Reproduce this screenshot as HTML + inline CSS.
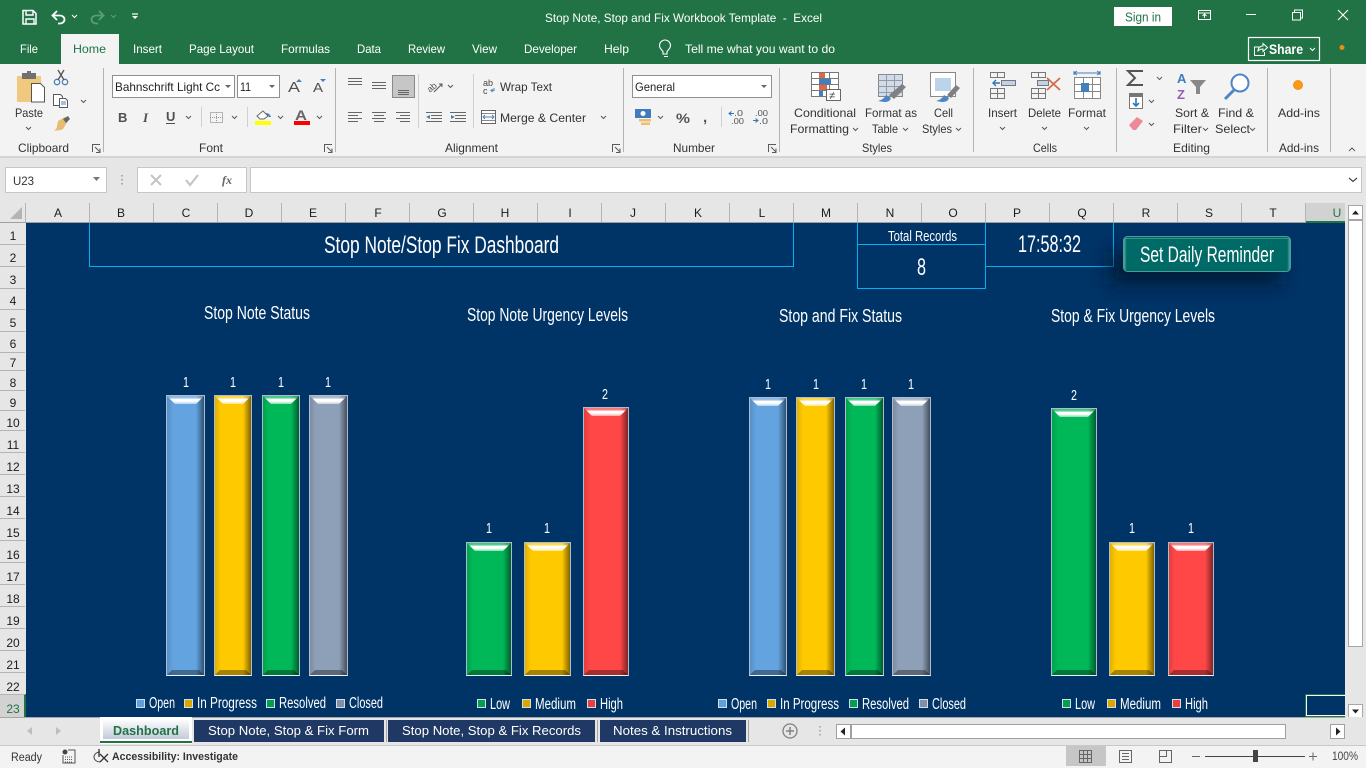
<!DOCTYPE html>
<html lang="en"><head><meta charset="utf-8"><title>Stop Note, Stop and Fix Workbook Template - Excel</title>
<style>
html,body{margin:0;padding:0;width:1366px;height:768px;overflow:hidden;background:#e6e6e6}
svg.page{position:absolute;left:0;top:0}
svg text{font-family:"Liberation Sans",sans-serif;white-space:pre}
.u{font-size:12px;fill:#333}
.m{font-size:12px;fill:#fff}
.c{font-size:12px;fill:#1c1c1c;text-anchor:middle}
.v{font-size:15px;fill:#fff;text-anchor:middle}
.t{font-size:18.5px;fill:#fff}
.l{font-size:15.5px;fill:#fff}
.s{font-size:13px;fill:#fff}
.b{position:absolute;box-sizing:border-box;border:1px solid #aebccd;border-bottom:1px solid #f0f4f8;overflow:hidden;background:
linear-gradient(to right,rgba(0,0,0,.12),transparent 6px,transparent calc(100% - 8px),rgba(0,0,0,.06) calc(100% - 7px),rgba(0,0,0,.5) 100%),var(--c)}
.b:before{content:"";position:absolute;left:0;right:0;top:0;height:8px;clip-path:polygon(0 0,100% 0,calc(100% - 8px) 100%,8px 100%);background:linear-gradient(rgba(255,255,255,.2),rgba(255,255,255,.35) 25%,#fff 40%,#fff 65%,rgba(255,255,255,.5))}
.b:after{content:"";position:absolute;left:0;right:0;bottom:0;height:5px;clip-path:polygon(5px 0,calc(100% - 5px) 0,100% 100%,0 100%);background:rgba(0,0,0,.35)}
</style></head><body>
<svg class="page" width="1366" height="768" viewBox="0 0 1366 768" xmlns="http://www.w3.org/2000/svg">
<defs>
<linearGradient id="dash" x1="0" y1="0" x2="0" y2="1"><stop offset="0" stop-color="#fff"/><stop offset="1" stop-color="#c2cad9"/></linearGradient>
<linearGradient id="btn" x1="0" y1="0" x2="1" y2="0"><stop offset="0" stop-color="#5ab5ae"/><stop offset=".02" stop-color="#006b66"/><stop offset=".98" stop-color="#006b66"/><stop offset="1" stop-color="#5ab5ae"/></linearGradient>
<filter id="blur" x="-30%" y="-60%" width="160%" height="220%"><feGaussianBlur stdDeviation="9"/></filter>
</defs>
<!-- title bar -->
<rect width="1366" height="64" fill="#217346"/>
<rect x="61" y="34" width="58" height="30" fill="#f3f3f3"/>
<g fill="none" stroke="#fff" stroke-width="1.5">
<path d="M23 10.500h10l3 3v10.500h-13z"/><path d="M26 11v4h7v-4M26 24v-5h8v5" stroke-width="1.400"/>
<path d="M53 15.500h7a4.500 4 0 0 1 0 8h-2" stroke-width="1.800"/><path d="M57 11l-4.500 4.500 4.500 4.500" stroke-width="1.800"/>
<path d="M72 15l2.500 2.500 2.500-2.500" stroke-width="1.100"/>
<g stroke="#5c9c7c"><path d="M103 15.500h-7a4.500 4 0 0 0 0 8h2" stroke-width="1.800"/><path d="M99 11l4.500 4.500-4.500 4.500" stroke-width="1.800"/><path d="M111 15l2.500 2.500 2.500-2.500" stroke-width="1.100"/></g>
<path d="M132 14h6" stroke-width="1.200"/>
<rect x="1198.500" y="10.500" width="12" height="9" stroke-width="1"/><path d="M1198.500 13h12M1204.500 18v-4M1202.500 16l2-2 2 2" stroke-width="1"/>
<path d="M1246 14.500h10" stroke-width="1"/>
<rect x="1292.500" y="12.500" width="8" height="7.500" stroke-width="1"/><path d="M1294.500 12v-2h8v8h-2" stroke-width="1"/>
<path d="M1338 10l10 10M1348 10l-10 10" stroke-width="1.100"/>
</g>
<path d="M132 16h6l-3 3z" fill="#fff"/>
<text class="m" x="545" y="22" textLength="277" lengthAdjust="spacingAndGlyphs">Stop Note, Stop and Fix Workbook Template  -  Excel</text>
<rect x="1114" y="7" width="58" height="19" fill="#fff"/>
<text class="u" x="1125" y="21.500" textLength="36" lengthAdjust="spacingAndGlyphs" style="fill:#217346;font-size:13px">Sign in</text>
<text class="m" x="20" y="53" textLength="18" lengthAdjust="spacingAndGlyphs">File</text>
<text class="m" x="73" y="53" textLength="33" lengthAdjust="spacingAndGlyphs" style="fill:#217346">Home</text>
<text class="m" x="133" y="53" textLength="29" lengthAdjust="spacingAndGlyphs">Insert</text>
<text class="m" x="189" y="53" textLength="65" lengthAdjust="spacingAndGlyphs">Page Layout</text>
<text class="m" x="281" y="53" textLength="49" lengthAdjust="spacingAndGlyphs">Formulas</text>
<text class="m" x="357" y="53" textLength="24" lengthAdjust="spacingAndGlyphs">Data</text>
<text class="m" x="408" y="53" textLength="37" lengthAdjust="spacingAndGlyphs">Review</text>
<text class="m" x="472" y="53" textLength="25" lengthAdjust="spacingAndGlyphs">View</text>
<text class="m" x="524" y="53" textLength="53" lengthAdjust="spacingAndGlyphs">Developer</text>
<text class="m" x="604" y="53" textLength="25" lengthAdjust="spacingAndGlyphs">Help</text>
<text class="m" x="685" y="53" textLength="150" lengthAdjust="spacingAndGlyphs">Tell me what you want to do</text>
<g fill="none" stroke="#fff" stroke-width="1.100"><path d="M663 54v-2.500c-1-1.500-3.500-3-3.500-6a5.500 5.500 0 0 1 11 0c0 3-2.500 4.500-3.500 6v2.500zM664 56.500h4"/>
<rect x="1248.500" y="37.500" width="71" height="23" stroke-width="1.200"/>
<path d="M1259 47h-4.500v8.500h10V52M1258 51c0-3 2-5 5-5v-2.500l4.500 4-4.500 4V49c-2 0-3.500.5-5 2z" stroke-width="1"/><path d="M1310 48l2.500 2.500 2.500-2.500"/></g>
<text x="1269" y="54" textLength="34" lengthAdjust="spacingAndGlyphs" style="font-size:13.500px;fill:#fff;font-weight:bold">Share</text>
<circle cx="1342" cy="47.500" r="2.500" fill="#f28a12"/>
<!-- ribbon -->
<rect y="64" width="1366" height="92" fill="#f3f3f3"/>
<rect y="156" width="1366" height="2" fill="#d4d4d4"/>
<rect y="158" width="1366" height="45" fill="#e6e6e6"/>
<g fill="#b3b3b3"><rect x="103" y="68" width="1" height="84"/><rect x="335" y="68" width="1" height="84"/><rect x="623" y="68" width="1" height="84"/><rect x="779" y="68" width="1" height="84"/><rect x="973" y="68" width="1" height="84"/><rect x="1116" y="68" width="1" height="84"/><rect x="1267" y="68" width="1" height="84"/><rect x="1330" y="68" width="1" height="84"/></g>
<g fill="#d0d0d0"><rect x="201" y="107" width="1" height="20"/><rect x="247" y="107" width="1" height="20"/><rect x="418" y="74" width="1" height="54"/><rect x="473" y="74" width="1" height="54"/><rect x="721" y="107" width="1" height="20"/></g>
<!-- clipboard -->
<path d="M17 76h24v13h-10v13h-14z" fill="#f0c87e"/><rect x="22" y="73" width="14" height="6" fill="#707070"/><rect x="27" y="71" width="4" height="3" fill="#707070"/>
<path d="M31.500 83.500h9l4 4v14.500h-13z" fill="#fff" stroke="#555"/>
<g fill="none" stroke="#4d7fb7" stroke-width="1.300"><circle cx="57" cy="82" r="2.700"/><circle cx="65" cy="82" r="2.700"/></g><path d="M58 80l6-10M64 80l-6-10" stroke="#555" stroke-width="1.300"/>
<g fill="#fff" stroke="#5a5a5a"><path d="M53.500 94.500h7l2 2v9h-9z"/><path d="M59.500 98.500h6l2 2v7h-8z"/></g><path d="M61 102h5M61 104h5" stroke="#4d7fb7"/>
<path d="M58 121l7-4 3 4-5 8c-3 2-6 1-9 2 2-2 3-3 3-5z" fill="#e8bb70"/><path d="M63 119l5-3 2 3-4 4z" fill="#666"/>
<text class="u" x="15" y="117" textLength="28" lengthAdjust="spacingAndGlyphs">Paste</text>
<text class="u" x="18" y="152" textLength="51" lengthAdjust="spacingAndGlyphs">Clipboard</text>
<text class="u" x="199" y="152" textLength="24" lengthAdjust="spacingAndGlyphs">Font</text>
<text class="u" x="445" y="152" textLength="53" lengthAdjust="spacingAndGlyphs">Alignment</text>
<text class="u" x="673" y="152" textLength="42" lengthAdjust="spacingAndGlyphs">Number</text>
<text class="u" x="862" y="152" textLength="30" lengthAdjust="spacingAndGlyphs">Styles</text>
<text class="u" x="1033" y="152" textLength="24" lengthAdjust="spacingAndGlyphs">Cells</text>
<text class="u" x="1173" y="152" textLength="37" lengthAdjust="spacingAndGlyphs">Editing</text>
<text class="u" x="1279" y="152" textLength="40" lengthAdjust="spacingAndGlyphs">Add-ins</text>
<!-- dialog launchers & chevrons -->
<g fill="none" stroke="#5a5a5a" stroke-width="1"><path d="M92.500 152v-7.500h7.500M95 147l5 5M100 148.500v4h-4"/><path d="M324.500 152v-7.500h7.500M327 147l5 5M332 148.500v4h-4"/><path d="M612.500 152v-7.500h7.500M615 147l5 5M620 148.500v4h-4"/><path d="M768.500 152v-7.500h7.500M771 147l5 5M776 148.500v4h-4"/>
<path d="M26 127l2.500 2.500 2.500-2.500M81 100l2.500 2.500 2.500-2.500M186 116l2.500 2.500 2.500-2.500M232 116l2.500 2.500 2.500-2.500M278 116l2.500 2.500 2.500-2.500M317 116l2.500 2.500 2.500-2.500M448 85l2.500 2.500 2.500-2.500M601 116l2.500 2.500 2.500-2.500M658 116l2.500 2.500 2.500-2.500M853 128l2.500 2.500 2.500-2.500M903 128l2.500 2.500 2.500-2.500M956 128l2.500 2.500 2.500-2.500M1000 127l2.500 2.500 2.500-2.500M1042 127l2.500 2.500 2.500-2.500M1084 127l2.500 2.500 2.500-2.500M1157 77l2.500 2.500 2.500-2.500M1149 100l2.500 2.500 2.500-2.500M1149 123l2.500 2.500 2.500-2.500M1203 128l2.500 2.500 2.500-2.500M1250 128l2.500 2.500 2.500-2.500M1349 151l3-3 3 3"/></g>
<!-- font group -->
<rect x="112.500" y="75.500" width="122" height="22" fill="#fff" stroke="#8f8f8f"/><rect x="237.500" y="75.500" width="42" height="22" fill="#fff" stroke="#8f8f8f"/>
<text class="u" x="115" y="91" textLength="105" lengthAdjust="spacingAndGlyphs" style="fill:#222">Bahnschrift Light Cc</text>
<text class="u" x="240" y="91" textLength="11" lengthAdjust="spacingAndGlyphs" style="fill:#222">11</text>
<path d="M225 85h6l-3 3zM269 85h6l-3 3z" fill="#666"/>
<text x="288" y="92" textLength="12" lengthAdjust="spacingAndGlyphs" style="font-size:15px;fill:#505050">A</text><path d="M296 82h6l-3-3z" fill="#4d7fb7"/>
<text x="313" y="92" textLength="10" lengthAdjust="spacingAndGlyphs" style="font-size:13px;fill:#505050">A</text><path d="M320 79h6l-3 3z" fill="#4d7fb7"/>
<text x="118" y="122" style="font-size:13px;font-weight:bold;fill:#505050">B</text>
<text x="143" y="122" style="font-size:13px;font-style:italic;font-family:'Liberation Serif',serif;font-weight:bold;fill:#505050">I</text>
<text x="166" y="121" style="font-size:13px;font-weight:bold;fill:#505050">U</text><rect x="166" y="123" width="9" height="1" fill="#505050"/>
<rect x="210.500" y="112.500" width="12" height="10" fill="none" stroke="#777" stroke-dasharray="1 1"/><path d="M216.500 112v11M210 117.500h13" stroke="#999" stroke-dasharray="1 1"/>
<path d="M257 116l6-5 5 5-4 3h-4z" fill="#fff" stroke="#666"/><path d="M266 113c2 0 4 1 5 4l-2 0z" fill="#4d7fb7"/><rect x="255" y="121" width="16" height="4" fill="#ff0"/>
<text x="295" y="120" textLength="12" lengthAdjust="spacingAndGlyphs" style="font-size:14px;font-weight:bold;fill:#666">A</text><rect x="294" y="121" width="16" height="4" fill="#f00"/>
<!-- alignment -->
<g stroke="#666" fill="none"><path d="M348 78.500h14M348 81.500h14M348 84.500h14M372 82.500h14M372 85.500h14M372 88.500h14"/>
<path d="M348 112.500h14M348 115.500h10M348 118.500h14M348 121.500h10M372 112.500h14M374 115.500h10M372 118.500h14M374 121.500h10M396 112.500h14M400 115.500h10M396 118.500h14M400 121.500h10"/>
<path d="M431 115.500h11M431 118.500h11M426 112.500h16M426 121.500h16M455 115.500h11M455 118.500h11M450 112.500h16M450 121.500h16"/></g>
<rect x="392.500" y="75.500" width="22" height="22" fill="#c6c6c6" stroke="#8a8a8a"/><path d="M398 90.500h11M398 92.500h11M398 94.500h11" stroke="#666"/>
<path d="M430 115l-4 2 4 2z" fill="#4d7fb7"/><path d="M451 115l4 2-4 2z" fill="#4d7fb7"/>
<text x="426" y="90" transform="rotate(-40 432 86)" style="font-size:9px;fill:#555">ab</text><path d="M434 92l8-8m-3 0h3v3" stroke="#555" fill="none"/>
<text x="483" y="86" style="font-size:9px;fill:#444">ab</text><text x="483" y="94" style="font-size:9px;fill:#444">c</text><path d="M494 88v2.500h-3m1.500-1.500l-1.500 1.500 1.500 1.500" stroke="#4d7fb7" fill="none"/>
<text class="u" x="500" y="91" textLength="52" lengthAdjust="spacingAndGlyphs">Wrap Text</text>
<rect x="481.500" y="110.500" width="14" height="13" fill="#fff" stroke="#666"/><path d="M482 113.500h13M482 120.500h13" stroke="#888"/><path d="M484 117h9M485 115l-2 2 2 2M492 115l2 2-2 2" stroke="#4d7fb7" fill="none"/>
<text class="u" x="500" y="122" textLength="86" lengthAdjust="spacingAndGlyphs">Merge &amp; Center</text>
<!-- number -->
<rect x="632.500" y="75.500" width="139" height="22" fill="#fff" stroke="#8f8f8f"/>
<path d="M761 85h6l-3 3z" fill="#666"/>
<text class="u" x="635" y="91" textLength="40" lengthAdjust="spacingAndGlyphs" style="fill:#222">General</text>
<rect x="635" y="109" width="16" height="9" fill="#3f7cbd"/><circle cx="643" cy="113.500" r="2.500" fill="#fff"/><rect x="639" y="119" width="12" height="2.500" fill="#ecc06c"/><rect x="641" y="122.500" width="9" height="2.500" fill="#ecc06c"/>
<text x="676" y="123" textLength="14" lengthAdjust="spacingAndGlyphs" style="font-size:14px;fill:#555;font-weight:bold">%</text>
<text x="703" y="122" style="font-size:15px;fill:#555;font-weight:bold">,</text>
<text x="734" y="116" textLength="9" lengthAdjust="spacingAndGlyphs" style="font-size:8px;fill:#555">.0</text><text x="731" y="124" textLength="13" lengthAdjust="spacingAndGlyphs" style="font-size:8px;fill:#555">.00</text><path d="M729 113.500h5m-2.500-2l-2.500 2 2.500 2" stroke="#2e75b6" fill="none"/>
<text x="755" y="116" textLength="13" lengthAdjust="spacingAndGlyphs" style="font-size:8px;fill:#555">.00</text><text x="759" y="124" textLength="9" lengthAdjust="spacingAndGlyphs" style="font-size:8px;fill:#555">.0</text><path d="M753 120.500h5m-2.500-2l2.500 2-2.500 2" stroke="#2e75b6" fill="none"/>
<!-- styles -->
<g fill="none" stroke="#777"><rect x="811.500" y="72.500" width="27" height="24" fill="#fff"/><path d="M811 78.500h28M811 84.500h28M811 90.500h28M820.500 72v25M829.500 72v25"/></g>
<rect x="819" y="73" width="6" height="5" fill="#d8694b"/><rect x="819" y="79" width="12" height="5" fill="#447fbd"/><rect x="819" y="85" width="8" height="5" fill="#d8694b"/><rect x="819" y="91" width="4" height="5" fill="#447fbd"/>
<rect x="826.500" y="89.500" width="14" height="11" fill="#fff" stroke="#666"/><text x="829" y="99" style="font-size:11px;fill:#444">≠</text>
<text class="u" x="794" y="117" textLength="62" lengthAdjust="spacingAndGlyphs">Conditional</text>
<text class="u" x="790" y="133" textLength="59" lengthAdjust="spacingAndGlyphs">Formatting</text>
<rect x="878.500" y="74.500" width="24" height="22" fill="#cfdceb" stroke="#888"/><path d="M878 80.500h25M878 86.500h25M878 92.500h25M886.500 74v23M894.500 74v23" stroke="#999"/><path d="M878 101c3-1 6-2 8-6l5 3c-1 3-3 4-7 4z" fill="#4d86c6"/><path d="M889 95l13-11 4 3-12 12z" fill="#808080"/>
<text class="u" x="865" y="117" textLength="52" lengthAdjust="spacingAndGlyphs">Format as</text>
<text class="u" x="872" y="133" textLength="26" lengthAdjust="spacingAndGlyphs">Table</text>
<rect x="930.500" y="72.500" width="25" height="24" fill="#fff" stroke="#888"/><rect x="935" y="78" width="16" height="13" fill="#bdd3ea"/><path d="M936 101c3-1 6-2 8-6l5 3c-1 3-3 4-7 4z" fill="#4d86c6"/><path d="M947 95l9-10 4 3-9 10z" fill="#808080"/>
<text class="u" x="934" y="117" textLength="19" lengthAdjust="spacingAndGlyphs">Cell</text>
<text class="u" x="922" y="133" textLength="30" lengthAdjust="spacingAndGlyphs">Styles</text>
<!-- cells -->
<g fill="none" stroke="#777"><rect x="990.500" y="72.500" width="14" height="5"/><path d="M997.500 72v6"/><rect x="990.500" y="88.500" width="14" height="10"/><path d="M997.500 88v11M990 93.500h15"/>
<rect x="1031.500" y="72.500" width="14" height="5"/><path d="M1038.500 72v6"/><rect x="1031.500" y="88.500" width="14" height="10"/><path d="M1038.500 88v11M1031 93.500h15"/></g>
<rect x="1001.500" y="80.500" width="14" height="5" fill="#bcd3ea" stroke="#777"/><path d="M1000 83h-7m3-3l-3 3 3 3" stroke="#2e75b6" fill="none" stroke-width="1.400"/>
<rect x="1037.500" y="80.500" width="11" height="5" fill="#bcd3ea" stroke="#777"/><path d="M1047 78l13 12M1060 78l-13 12" stroke="#d8694b" stroke-width="1.800"/>
<g fill="none" stroke="#888"><rect x="1074.500" y="77.500" width="26" height="21" fill="#fff"/><path d="M1074 84.500h27M1074 91.500h27M1083.500 77v22M1092.500 77v22"/></g><rect x="1081" y="83" width="8" height="9" fill="#447fbd"/><path d="M1074 73h26M1074 71v4M1100 71v4M1077 71l-3 2 3 2M1097 71l3 2-3 2" stroke="#447fbd" fill="none"/>
<text class="u" x="988" y="117" textLength="29" lengthAdjust="spacingAndGlyphs">Insert</text>
<text class="u" x="1028" y="117" textLength="33" lengthAdjust="spacingAndGlyphs">Delete</text>
<text class="u" x="1068" y="117" textLength="38" lengthAdjust="spacingAndGlyphs">Format</text>
<!-- editing -->
<path d="M1143 71h-15l7 7-7 7h15" fill="none" stroke="#555" stroke-width="2"/>
<rect x="1129.500" y="93.500" width="13" height="15" fill="#fff" stroke="#777"/><rect x="1130" y="94" width="12" height="3" fill="#777"/><path d="M1136 98v8m-3-3l3 3 3-3" fill="none" stroke="#2e75b6" stroke-width="1.600"/>
<path d="M1129 125l8-8 6 4-7 9h-3z" fill="#ec8a99"/>
<text x="1177" y="83" style="font-size:13px;font-weight:bold;fill:#3f7cbd">A</text><text x="1177" y="99" style="font-size:13px;font-weight:bold;fill:#9561b0">Z</text>
<path d="M1190 80h16l-6 7v7h-4v-7z" fill="#888"/>
<text class="u" x="1175" y="117" textLength="34" lengthAdjust="spacingAndGlyphs">Sort &amp;</text>
<text class="u" x="1173" y="133" textLength="29" lengthAdjust="spacingAndGlyphs">Filter</text>
<circle cx="1240" cy="83" r="8.500" fill="#fff" stroke="#4d86c6" stroke-width="2"/><path d="M1234 90l-9 9" stroke="#4d86c6" stroke-width="3"/>
<text class="u" x="1218" y="117" textLength="36" lengthAdjust="spacingAndGlyphs">Find &amp;</text>
<text class="u" x="1215" y="133" textLength="35" lengthAdjust="spacingAndGlyphs">Select</text>
<circle cx="1298" cy="85" r="5" fill="#f7941d"/><circle cx="1298" cy="85" r="3" fill="#ff9a1a"/>
<text class="u" x="1278" y="117" textLength="42" lengthAdjust="spacingAndGlyphs">Add-ins</text>
<!-- formula bar -->
<rect x="5.500" y="167.500" width="101" height="25" fill="#fff" stroke="#c6c6c6"/>
<text x="13" y="185" textLength="21" lengthAdjust="spacingAndGlyphs" style="font-size:12px;fill:#333">U23</text>
<path d="M93 177h7l-3.500 4z" fill="#777"/>
<path d="M122 175v1.500M122 179v1.500M122 183v1.500" stroke="#aaa" stroke-width="2"/>
<rect x="137.500" y="167.500" width="109" height="25" fill="#fff" stroke="#c6c6c6"/>
<rect x="250.500" y="167.500" width="1111" height="25" fill="#fff" stroke="#c6c6c6"/>
<path d="M151 175l10 10M161 175l-10 10" stroke="#c4c4c4" stroke-width="2"/><path d="M186 180l4 5 8-10" fill="none" stroke="#c4c4c4" stroke-width="2.200"/>
<text x="222" y="184" style="font-size:12px;font-style:italic;font-weight:bold;font-family:'Liberation Serif',serif;fill:#666">fx</text>
<path d="M1349 178l4 3.500 4-3.500" fill="none" stroke="#444" stroke-width="1.200"/>
<!-- headers -->
<rect y="203" width="1366" height="20" fill="#e6e6e6"/><rect y="222" width="1345" height="1" fill="#a0a0a0"/>
<path d="M10 219h12v-12z" fill="#b4b4b4"/>
<rect x="1306" y="203" width="39" height="19" fill="#d2d2d2"/><rect x="1306" y="221" width="39" height="2" fill="#217346"/>
<g fill="#b4b4b4"><rect x="25" y="203" width="1" height="19"/><rect x="89" y="203" width="1" height="19"/><rect x="153" y="203" width="1" height="19"/><rect x="217" y="203" width="1" height="19"/><rect x="281" y="203" width="1" height="19"/><rect x="345" y="203" width="1" height="19"/><rect x="409" y="203" width="1" height="19"/><rect x="473" y="203" width="1" height="19"/><rect x="537" y="203" width="1" height="19"/><rect x="601" y="203" width="1" height="19"/><rect x="665" y="203" width="1" height="19"/><rect x="729" y="203" width="1" height="19"/><rect x="793" y="203" width="1" height="19"/><rect x="857" y="203" width="1" height="19"/><rect x="921" y="203" width="1" height="19"/><rect x="985" y="203" width="1" height="19"/><rect x="1049" y="203" width="1" height="19"/><rect x="1113" y="203" width="1" height="19"/><rect x="1177" y="203" width="1" height="19"/><rect x="1241" y="203" width="1" height="19"/><rect x="1305" y="203" width="1" height="19"/></g>
<text class="c" x="58" y="217">A</text><text class="c" x="121" y="217">B</text><text class="c" x="186" y="217">C</text><text class="c" x="249" y="217">D</text><text class="c" x="313" y="217">E</text><text class="c" x="378" y="217">F</text><text class="c" x="442" y="217">G</text><text class="c" x="505" y="217">H</text><text class="c" x="570" y="217">I</text><text class="c" x="633" y="217">J</text><text class="c" x="698" y="217">K</text><text class="c" x="762" y="217">L</text><text class="c" x="826" y="217">M</text><text class="c" x="890" y="217">N</text><text class="c" x="953" y="217">O</text><text class="c" x="1017" y="217">P</text><text class="c" x="1082" y="217">Q</text><text class="c" x="1146" y="217">R</text><text class="c" x="1209" y="217">S</text><text class="c" x="1273" y="217">T</text><text class="c" x="1337" y="217" style="fill:#217346">U</text>
<rect y="223" width="26" height="494" fill="#e6e6e6"/>
<rect y="694" width="26" height="23" fill="#d2d2d2"/><rect x="24" y="694" width="2" height="23" fill="#217346"/>
<g fill="#b4b4b4"><rect y="244" width="25" height="1"/><rect y="266" width="25" height="1"/><rect y="288" width="25" height="1"/><rect y="309" width="25" height="1"/><rect y="331" width="25" height="1"/><rect y="352" width="25" height="1"/><rect y="370" width="25" height="1"/><rect y="390" width="25" height="1"/><rect y="410" width="25" height="1"/><rect y="430" width="25" height="1"/><rect y="452" width="25" height="1"/><rect y="474" width="25" height="1"/><rect y="496" width="25" height="1"/><rect y="518" width="25" height="1"/><rect y="540" width="25" height="1"/><rect y="562" width="25" height="1"/><rect y="584" width="25" height="1"/><rect y="606" width="25" height="1"/><rect y="628" width="25" height="1"/><rect y="650" width="25" height="1"/><rect y="672" width="25" height="1"/><rect y="694" width="25" height="1"/></g>
<text class="c" x="13" y="240">1</text><text class="c" x="13" y="262">2</text><text class="c" x="13" y="284">3</text><text class="c" x="13" y="305">4</text><text class="c" x="13" y="327">5</text><text class="c" x="13" y="348">6</text><text class="c" x="13" y="367">7</text><text class="c" x="13" y="387">8</text><text class="c" x="13" y="407">9</text><text class="c" x="13" y="427">10</text><text class="c" x="13" y="449">11</text><text class="c" x="13" y="471">12</text><text class="c" x="13" y="493">13</text><text class="c" x="13" y="515">14</text><text class="c" x="13" y="537">15</text><text class="c" x="13" y="559">16</text><text class="c" x="13" y="581">17</text><text class="c" x="13" y="603">18</text><text class="c" x="13" y="625">19</text><text class="c" x="13" y="647">20</text><text class="c" x="13" y="669">21</text><text class="c" x="13" y="691">22</text><text class="c" x="13" y="713" style="fill:#217346">23</text>
<!-- sheet -->
<rect x="26" y="223" width="1319" height="494" fill="#003366"/>
<g fill="none" stroke="#00b0f0"><path d="M89.500 223v43.500h704v-43.500"/><path d="M857.500 223v65.500h128v-65.500M857.500 244.500h128M985.500 266.500h128v-43.500"/></g>
<text x="324" y="253" textLength="235" lengthAdjust="spacingAndGlyphs" style="font-size:24px;fill:#fff">Stop Note/Stop Fix Dashboard</text>
<text x="888" y="241" textLength="69" lengthAdjust="spacingAndGlyphs" style="font-size:15px;fill:#fff">Total Records</text>
<text x="917" y="275" textLength="9" lengthAdjust="spacingAndGlyphs" style="font-size:24px;fill:#fff">8</text>
<text x="1018" y="252" textLength="63" lengthAdjust="spacingAndGlyphs" style="font-size:24px;fill:#fff">17:58:32</text>
<rect x="1110" y="252" width="170" height="32" fill="#00122f" opacity=".8" filter="url(#blur)"/>
<rect x="1123.500" y="236.500" width="167" height="35" rx="4" fill="url(#btn)" stroke="#4a9c98"/>
<rect x="1125" y="238" width="164" height="1" fill="#3a8f8a"/>
<text x="1140" y="262" textLength="134" lengthAdjust="spacingAndGlyphs" style="font-size:22px;fill:#fff">Set Daily Reminder</text>
<!-- chart labels -->
<text class="t" x="204" y="319" textLength="106" lengthAdjust="spacingAndGlyphs">Stop Note Status</text>
<text class="t" x="467" y="321" textLength="161" lengthAdjust="spacingAndGlyphs">Stop Note Urgency Levels</text>
<text class="t" x="779" y="322" textLength="123" lengthAdjust="spacingAndGlyphs">Stop and Fix Status</text>
<text class="t" x="1051" y="322" textLength="164" lengthAdjust="spacingAndGlyphs">Stop &amp; Fix Urgency Levels</text>
<text class="v" x="186" y="387" textLength="6" lengthAdjust="spacingAndGlyphs">1</text><text class="v" x="233" y="387" textLength="6" lengthAdjust="spacingAndGlyphs">1</text><text class="v" x="281" y="387" textLength="6" lengthAdjust="spacingAndGlyphs">1</text><text class="v" x="328" y="387" textLength="6" lengthAdjust="spacingAndGlyphs">1</text>
<text class="v" x="489" y="533" textLength="6" lengthAdjust="spacingAndGlyphs">1</text><text class="v" x="547" y="533" textLength="6" lengthAdjust="spacingAndGlyphs">1</text><text class="v" x="605" y="399" textLength="6" lengthAdjust="spacingAndGlyphs">2</text>
<text class="v" x="768" y="389" textLength="6" lengthAdjust="spacingAndGlyphs">1</text><text class="v" x="816" y="389" textLength="6" lengthAdjust="spacingAndGlyphs">1</text><text class="v" x="864" y="389" textLength="6" lengthAdjust="spacingAndGlyphs">1</text><text class="v" x="911" y="389" textLength="6" lengthAdjust="spacingAndGlyphs">1</text>
<text class="v" x="1074" y="400" textLength="6" lengthAdjust="spacingAndGlyphs">2</text><text class="v" x="1132" y="533" textLength="6" lengthAdjust="spacingAndGlyphs">1</text><text class="v" x="1191" y="533" textLength="6" lengthAdjust="spacingAndGlyphs">1</text>
<!-- legends -->
<g stroke="#d5dde6" stroke-width="1">
<rect x="136.500" y="699.500" width="8" height="8" fill="#5f9fdd"/><rect x="184.500" y="699.500" width="8" height="8" fill="#d9a800"/><rect x="266.500" y="699.500" width="8" height="8" fill="#00a050"/><rect x="336.500" y="699.500" width="8" height="8" fill="#7f90a8"/>
<rect x="477.500" y="699.500" width="8" height="8" fill="#00a050"/><rect x="522.500" y="699.500" width="8" height="8" fill="#d9a800"/><rect x="587.500" y="699.500" width="8" height="8" fill="#e83e3e"/>
<rect x="718.500" y="699.500" width="8" height="8" fill="#5f9fdd"/><rect x="767.500" y="699.500" width="8" height="8" fill="#d9a800"/><rect x="849.500" y="699.500" width="8" height="8" fill="#00a050"/><rect x="919.500" y="699.500" width="8" height="8" fill="#7f90a8"/>
<rect x="1062.500" y="699.500" width="8" height="8" fill="#00a050"/><rect x="1107.500" y="699.500" width="8" height="8" fill="#d9a800"/><rect x="1172.500" y="699.500" width="8" height="8" fill="#e83e3e"/>
</g>
<text class="l" x="149" y="708" textLength="26" lengthAdjust="spacingAndGlyphs">Open</text><text class="l" x="197" y="708" textLength="60" lengthAdjust="spacingAndGlyphs">In Progress</text><text class="l" x="279" y="708" textLength="47" lengthAdjust="spacingAndGlyphs">Resolved</text><text class="l" x="349" y="708" textLength="34" lengthAdjust="spacingAndGlyphs">Closed</text>
<text class="l" x="490" y="709" textLength="20" lengthAdjust="spacingAndGlyphs">Low</text><text class="l" x="535" y="709" textLength="41" lengthAdjust="spacingAndGlyphs">Medium</text><text class="l" x="600" y="709" textLength="23" lengthAdjust="spacingAndGlyphs">High</text>
<text class="l" x="731" y="709" textLength="26" lengthAdjust="spacingAndGlyphs">Open</text><text class="l" x="780" y="709" textLength="59" lengthAdjust="spacingAndGlyphs">In Progress</text><text class="l" x="862" y="709" textLength="47" lengthAdjust="spacingAndGlyphs">Resolved</text><text class="l" x="932" y="709" textLength="34" lengthAdjust="spacingAndGlyphs">Closed</text>
<text class="l" x="1075" y="709" textLength="20" lengthAdjust="spacingAndGlyphs">Low</text><text class="l" x="1120" y="709" textLength="41" lengthAdjust="spacingAndGlyphs">Medium</text><text class="l" x="1185" y="709" textLength="23" lengthAdjust="spacingAndGlyphs">High</text>
<!-- selected cell -->
<rect x="1305" y="694" width="40" height="23" fill="#217346"/><rect x="1306" y="695" width="39" height="21" fill="#fff"/><rect x="1307" y="696" width="38" height="19" fill="#003366"/>
<!-- vertical scrollbar -->
<rect x="1345" y="203" width="21" height="542" fill="#e6e6e6"/>
<rect x="1348.500" y="205.500" width="14" height="14" fill="#fff" stroke="#a6a6a6"/><path d="M1352 214.500h7l-3.500-4z" fill="#222"/>
<rect x="1348.500" y="220.500" width="14" height="426" fill="#fff" stroke="#a6a6a6"/>
<rect x="1348.500" y="704.500" width="14" height="14" fill="#fff" stroke="#a6a6a6"/><path d="M1352 709.500h7l-3.500 4z" fill="#222"/>
<!-- sheet tabs -->
<rect y="717" width="1366" height="28" fill="#e6e6e6"/><rect y="717" width="1345" height="1" fill="#a6a6a6"/>
<rect x="100" y="717" width="92" height="27" fill="#fff"/><rect x="103" y="719" width="86" height="20" fill="url(#dash)"/><rect x="100" y="741" width="92" height="2" fill="#217346"/>
<text x="113" y="735" textLength="66" lengthAdjust="spacingAndGlyphs" style="font-size:13px;font-weight:bold;fill:#217346">Dashboard</text>
<rect x="194" y="720" width="190" height="22" fill="#1f3864"/><rect x="388" y="720" width="207" height="22" fill="#1f3864"/><rect x="600" y="720" width="146" height="22" fill="#1f3864"/>
<rect x="386" y="720" width="1" height="22" fill="#a6a6a6"/><rect x="597" y="720" width="1" height="22" fill="#a6a6a6"/><rect x="748" y="720" width="1" height="22" fill="#a6a6a6"/>
<text class="s" x="208" y="735" textLength="161" lengthAdjust="spacingAndGlyphs">Stop Note, Stop &amp; Fix Form</text>
<text class="s" x="402" y="735" textLength="179" lengthAdjust="spacingAndGlyphs">Stop Note, Stop &amp; Fix Records</text>
<text class="s" x="613" y="735" textLength="119" lengthAdjust="spacingAndGlyphs">Notes &amp; Instructions</text>
<path d="M32 727v8l-5-4zM56 727v8l5-4z" fill="#bdbdbd"/>
<circle cx="790" cy="731" r="7" fill="none" stroke="#808080" stroke-width="1.300"/><path d="M786 731h8M790 727v8" stroke="#808080" stroke-width="1.500"/>
<path d="M820 726v1.500M820 730v1.500M820 734v1.500" stroke="#b0b0b0" stroke-width="2"/>
<rect x="836.500" y="724.500" width="14" height="14" fill="#fff" stroke="#a0a0a0"/><path d="M845 727.500v8l-4.500-4z" fill="#222"/>
<rect x="851.500" y="724.500" width="434" height="14" fill="#fff" stroke="#a0a0a0"/>
<rect x="1330.500" y="724.500" width="14" height="14" fill="#fff" stroke="#a0a0a0"/><path d="M1336 727.500v8l4.500-4z" fill="#222"/>
<!-- status bar -->
<rect y="745" width="1366" height="1" fill="#c8c8c8"/><rect y="746" width="1366" height="22" fill="#f3f3f3"/>
<text x="11" y="761" textLength="31" lengthAdjust="spacingAndGlyphs" style="font-size:11.500px;fill:#333">Ready</text>
<circle cx="65" cy="752" r="2.500" fill="#444"/><path d="M68 750h7v13h-12v-8" fill="none" stroke="#555"/><path d="M65 757h8M65 759.500h8M65 762h8" stroke="#555" stroke-dasharray="1 1"/>
<path d="M100 752c-3 0-6 2-6 5s3 5 6 5" fill="none" stroke="#444"/><path d="M99 749v8M100 754l8 8M108 754l-8 8" stroke="#333" stroke-width="1.300"/>
<text x="112" y="760" textLength="126" lengthAdjust="spacingAndGlyphs" style="font-size:11px;font-weight:bold;fill:#333">Accessibility: Investigate</text>
<rect x="1066" y="746" width="40" height="20" fill="#c6c6c6"/>
<g fill="none" stroke="#666"><rect x="1079.500" y="750.500" width="12" height="12"/><path d="M1083.500 750v13M1087.500 750v13M1079 754.500h13M1079 758.500h13"/>
<rect x="1119.500" y="750.500" width="12" height="12"/><path d="M1122 753.500h7M1122 756.500h7M1122 759.500h7"/>
<rect x="1159.500" y="750.500" width="12" height="12"/><path d="M1166.500 750v6.500h-7"/>
<path d="M1192 756.500h8M1309 756.500h8M1313 752.500v8"/></g>
<rect x="1205" y="756" width="100" height="1" fill="#444"/><rect x="1253" y="750" width="5" height="12" fill="#444"/>
<text x="1332" y="760" textLength="26" lengthAdjust="spacingAndGlyphs" style="font-size:11.500px;fill:#444">100%</text>
</svg>
<div class="b" style="--c:#62a3e0;left:166px;top:395px;width:39px;height:281px"></div>
<div class="b" style="--c:#ffc900;left:214px;top:395px;width:38px;height:281px"></div>
<div class="b" style="--c:#00b858;left:262px;top:395px;width:38px;height:281px"></div>
<div class="b" style="--c:#8ea0b8;left:309px;top:395px;width:39px;height:281px"></div>
<div class="b" style="--c:#00b858;left:466px;top:542px;width:46px;height:134px"></div>
<div class="b" style="--c:#ffc900;left:524px;top:542px;width:47px;height:134px"></div>
<div class="b" style="--c:#ff4747;left:583px;top:407px;width:46px;height:269px"></div>
<div class="b" style="--c:#62a3e0;left:749px;top:397px;width:38px;height:279px"></div>
<div class="b" style="--c:#ffc900;left:796px;top:397px;width:39px;height:279px"></div>
<div class="b" style="--c:#00b858;left:845px;top:397px;width:39px;height:279px"></div>
<div class="b" style="--c:#8ea0b8;left:892px;top:397px;width:39px;height:279px"></div>
<div class="b" style="--c:#00b858;left:1051px;top:408px;width:46px;height:268px"></div>
<div class="b" style="--c:#ffc900;left:1109px;top:542px;width:46px;height:134px"></div>
<div class="b" style="--c:#ff4747;left:1168px;top:542px;width:46px;height:134px"></div>
</body></html>
